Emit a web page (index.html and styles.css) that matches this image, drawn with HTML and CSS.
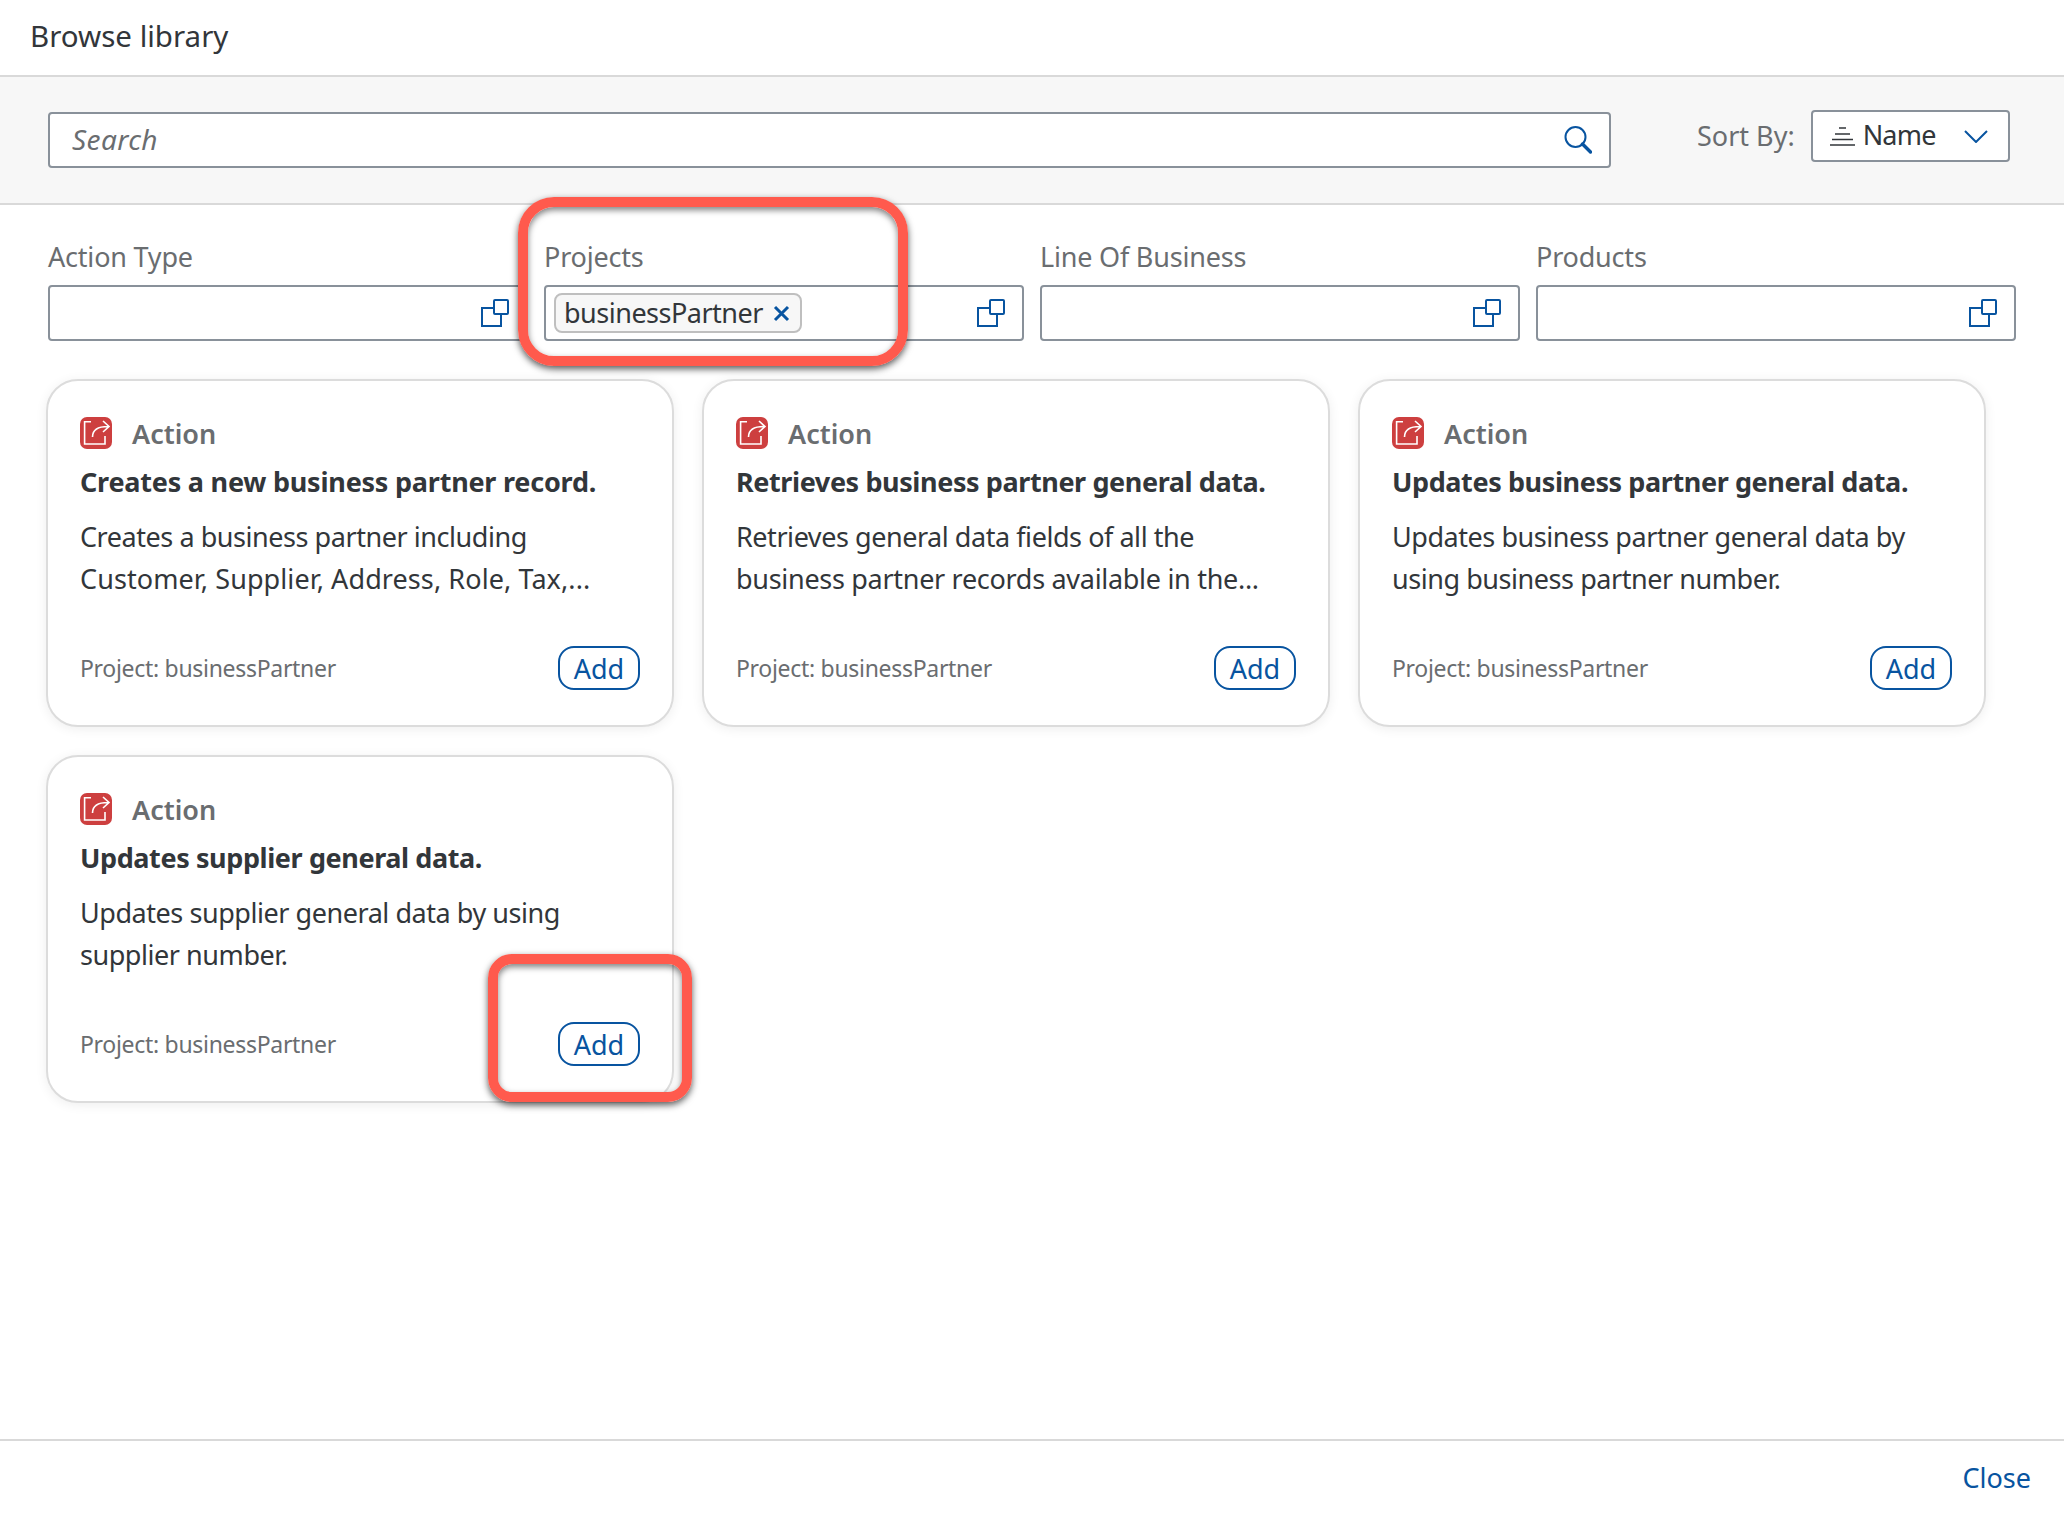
FILE: index.html
```html
<!DOCTYPE html>
<html lang="en">
<head>
    <meta charset="UTF-8">
    <title>Browse library</title>
    <link rel="stylesheet" href="styles.css">
</head>
<body>
    <svg class="sprites" width="0" height="0">
        <symbol id="value-help" viewBox="0 0 28 28">
            <path d="M12 9H1v18h19V16" fill="none" stroke="currentColor" stroke-width="2"/>
            <rect x="13" y="1" width="14" height="14" rx="1" fill="none" stroke="currentColor" stroke-width="2"/>
        </symbol>
        <symbol id="action" viewBox="0 0 32 32">
            <rect width="32" height="32" rx="7" fill="#cd3f3f"/>
            <path d="M11 4.8H4.600V27H25v-8" fill="none" stroke="#fff" stroke-width="1.6"/>
            <path d="M12.500 20c0-7 5-10.500 15.500-10.500M23 4l6 5.500-6 5.500" fill="none" stroke="#fff" stroke-width="1.6"/>
        </symbol>
    </svg>

    <div class="page">
        <header class="header">Browse library</header>

        <div class="toolbar">
            <div class="search">
                <span class="search-text">Search</span>
                <svg class="search-icon" width="28" height="28" viewBox="0 0 28 28">
                    <circle cx="11.5" cy="11" r="10" fill="none" stroke="#0854a0" stroke-width="2"/>
                    <path d="M18.5 18l8 8" stroke="#0854a0" stroke-width="3.4" stroke-linecap="round"/>
                </svg>
            </div>
            <span class="sort-label">Sort By:</span>
            <div class="select">
                <svg class="sort-icon" width="25" height="19" viewBox="0 0 25 19">
                    <path d="M9 1h7M5 7h15M2 12.500h21M0 18h25" stroke="#32363a" stroke-width="1.5"/>
                </svg>
                <span class="select-text">Name</span>
                <svg class="chevron" width="24" height="13" viewBox="0 0 24 13">
                    <path d="M1 1l11 11L23 1" fill="none" stroke="#0854a0" stroke-width="2"/>
                </svg>
            </div>
        </div>

        <div class="filters">
            <div class="filter">
                <div class="filter-label">Action Type</div>
                <div class="filter-box">
                    <svg class="help-icon"><use href="#value-help"/></svg>
                </div>
            </div>
            <div class="filter">
                <div class="filter-label">Projects</div>
                <div class="filter-box">
                    <span class="chip"><span class="chip-text">businessPartner</span>
                        <svg class="chip-x" width="17" height="17" viewBox="0 0 17 17">
                            <path d="M2 2l13 13M15 2L2 15" stroke="#0854a0" stroke-width="3"/>
                        </svg>
                    </span>
                    <svg class="help-icon"><use href="#value-help"/></svg>
                </div>
            </div>
            <div class="filter">
                <div class="filter-label">Line Of Business</div>
                <div class="filter-box">
                    <svg class="help-icon"><use href="#value-help"/></svg>
                </div>
            </div>
            <div class="filter">
                <div class="filter-label">Products</div>
                <div class="filter-box">
                    <svg class="help-icon"><use href="#value-help"/></svg>
                </div>
            </div>
        </div>

        <main class="cards">
            <article class="card">
                <div class="card-type"><svg class="type-icon"><use href="#action"/></svg>Action</div>
                <h3 class="card-title card-title-wide">Creates a new business partner record.</h3>
                <p class="card-desc">Creates a business partner including<br><span class="line-commas">Customer, Supplier, Address, Role, Tax,...</span></p>
                <div class="card-foot">
                    <span class="card-project">Project: businessPartner</span>
                    <button class="add">Add</button>
                </div>
            </article>
            <article class="card">
                <div class="card-type"><svg class="type-icon"><use href="#action"/></svg>Action</div>
                <h3 class="card-title">Retrieves business partner general data.</h3>
                <p class="card-desc">Retrieves general data fields of all the<br><span class="line-long">business partner records available in the...</span></p>
                <div class="card-foot">
                    <span class="card-project">Project: businessPartner</span>
                    <button class="add">Add</button>
                </div>
            </article>
            <article class="card">
                <div class="card-type"><svg class="type-icon"><use href="#action"/></svg>Action</div>
                <h3 class="card-title">Updates business partner general data.</h3>
                <p class="card-desc">Updates business partner general data by<br>using business partner number.</p>
                <div class="card-foot">
                    <span class="card-project">Project: businessPartner</span>
                    <button class="add">Add</button>
                </div>
            </article>
            <article class="card">
                <div class="card-type"><svg class="type-icon"><use href="#action"/></svg>Action</div>
                <h3 class="card-title">Updates supplier general data.</h3>
                <p class="card-desc">Updates supplier general data by using<br>supplier number.</p>
                <div class="card-foot">
                    <span class="card-project">Project: businessPartner</span>
                    <button class="add">Add</button>
                </div>
            </article>
        </main>

        <footer class="footer">Close</footer>

        <div class="callout callout-projects"></div>
        <div class="callout callout-add"></div>
    </div>
</body>
</html>
```

FILE: styles.css
```css
*{
    box-sizing: border-box;
    padding: 0;
    margin: 0;
}

body{
    background: #fff;
    color: #32363a;
    font-family: "Noto Sans", sans-serif;
    font-size: 27px;
}

.sprites{
    position: absolute;
}

.page{
    position: relative;
    display: flex;
    flex-direction: column;
    width: 2064px;
    height: 1518px;
    overflow: hidden;
}

.header{
    height: 77px;
    padding: 16px 30px 0;
    font-size: 29.5px;
    line-height: 40px;
    border-bottom: 2px solid #d9d9d9;
}

.toolbar{
    display: flex;
    align-items: flex-start;
    height: 128px;
    padding: 35px 0 0 48px;
    background: #f7f7f7;
    border-bottom: 2px solid #d9d9d9;
}

.search{
    display: flex;
    align-items: center;
    justify-content: space-between;
    width: 1563px;
    height: 56px;
    padding: 0 17px 0 22px;
    background: #fff;
    border: 2px solid #89919a;
    border-radius: 4px;
}

.search-text{
    padding-bottom: 2px;
    color: #6a6d70;
    font-size: 28px;
    font-style: italic;
    letter-spacing: 0.4px;
}

.sort-label{
    margin: -3px 0 0 86px;
    color: #6a6d70;
    line-height: 54px;
}

.select{
    display: flex;
    align-items: center;
    width: 199px;
    height: 52px;
    margin: -2px 0 0 16px;
    padding: 0 20px 0 17px;
    background: #fff;
    border: 2px solid #89919a;
    border-radius: 4px;
}

.select-text{
    margin-left: 8px;
    padding-bottom: 2px;
    letter-spacing: -0.8px;
    line-height: 46px;
}

.chevron{
    margin-left: auto;
}

.filters{
    display: grid;
    grid-template-columns: repeat(4, 480px);
    gap: 16px;
    padding: 36px 0 0 48px;
}

.filter-label{
    margin-bottom: 12px;
    color: #6a6d70;
    letter-spacing: -0.2px;
    line-height: 32px;
}

.filter-box{
    display: flex;
    align-items: center;
    height: 56px;
    padding: 0 17px 0 8px;
    border: 2px solid #89919a;
    border-radius: 4px;
}

.help-icon{
    width: 28px;
    height: 28px;
    margin-left: auto;
    color: #0854a0;
}

.chip{
    display: flex;
    align-items: center;
    justify-content: space-between;
    width: 248px;
    height: 40px;
    padding: 0 10px 0 8px;
    background: #f7f7f7;
    border: 2px solid #bfbfbf;
    border-radius: 8px;
}

.chip-text{
    padding-bottom: 2px;
    letter-spacing: -0.5px;
}

.cards{
    display: grid;
    grid-template-columns: repeat(3, 628px);
    grid-auto-rows: 348px;
    gap: 28px;
    flex: 1;
    align-content: start;
    padding: 38px 0 0 46px;
}

.card{
    display: flex;
    flex-direction: column;
    padding: 36px 32px 35px;
    background: #fff;
    border: 2px solid #dcdcdc;
    border-radius: 32px;
    box-shadow: 0 2px 12px rgba(0, 0, 0, 0.07);
}

.card-type{
    display: flex;
    align-items: center;
    height: 32px;
    color: #6a6d70;
    font-weight: 600;
}

.type-icon{
    width: 32px;
    height: 32px;
    margin-right: 20px;
}

.card-title{
    margin-top: 13px;
    font-size: 27px;
    font-weight: 700;
    letter-spacing: -0.4px;
    line-height: 40px;
}

.card-title-wide{
    letter-spacing: -0.22px;
}

.card-desc{
    margin-top: 14px;
    letter-spacing: -0.45px;
    line-height: 42px;
}

.line-commas{
    letter-spacing: 0.09px;
}

.line-long{
    letter-spacing: -0.3px;
}

.card-foot{
    display: flex;
    align-items: center;
    justify-content: space-between;
    margin-top: auto;
}

.card-project{
    color: #6a6d70;
    font-size: 23px;
    letter-spacing: -0.3px;
}

.add{
    width: 82px;
    height: 44px;
    color: #0854a0;
    font: inherit;
    background: #fff;
    border: 2px solid #0854a0;
    border-radius: 16px;
}

.footer{
    height: 79px;
    padding: 17px 33px 0 0;
    color: #0854a0;
    line-height: 40px;
    text-align: right;
    border-top: 2px solid #d9d9d9;
}

.callout{
    position: absolute;
    border: 10px solid #ff5a4d;
    box-shadow: 0 3px 7px rgba(0, 0, 0, 0.65), inset 0 3px 6px rgba(0, 0, 0, 0.5);
}

.callout-projects{
    left: 518px;
    top: 197px;
    width: 390px;
    height: 169px;
    border-radius: 36px;
}

.callout-add{
    left: 488px;
    top: 954px;
    width: 204px;
    height: 148px;
    border-radius: 24px;
}
```
